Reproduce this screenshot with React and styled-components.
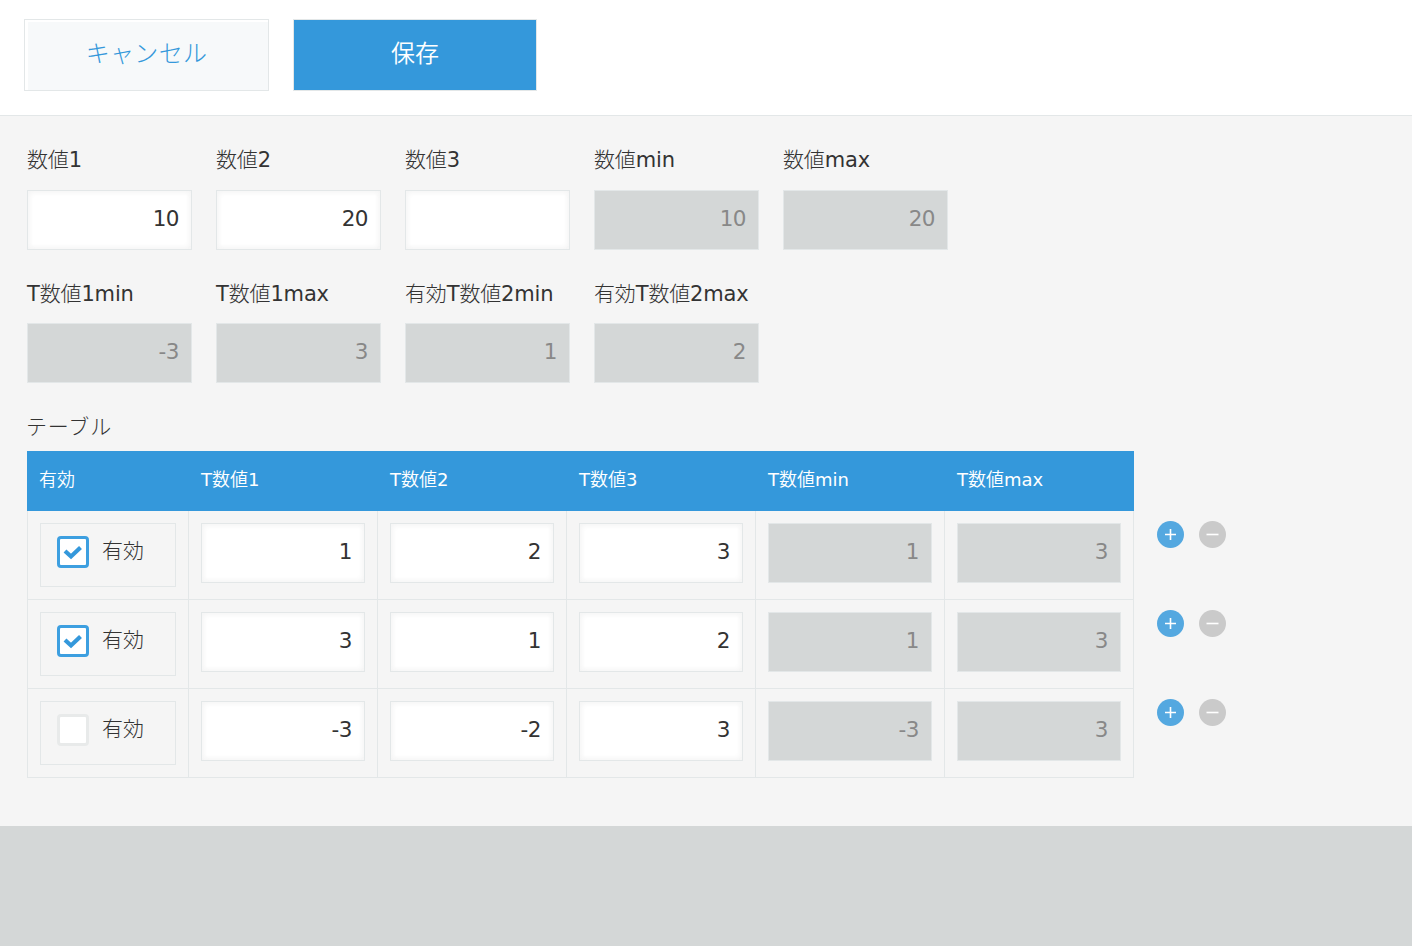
import React, { useState } from "react";
import styled, { createGlobalStyle } from "styled-components";

const lightFont = `"DejaVu Sans", "Noto Sans CJK JP Light", "Noto Sans CJK JP", sans-serif`;

const GlobalStyle = createGlobalStyle`
  * {
    box-sizing: border-box;
  }
  body {
    margin: 0;
    background: #d4d7d7;
    color: #333;
    font-family: "DejaVu Sans", "Noto Sans CJK JP DemiLight", "Noto Sans CJK JP", sans-serif;
    font-size: 21px;
    letter-spacing: -0.15px;
  }
`;

const Toolbar = styled.header`
  display: flex;
  gap: 24px;
  height: 116px;
  padding: 19px 24px 0;
  background: #fff;
  border-bottom: 1px solid #e3e7e8;
`;

const Button = styled.button`
  width: ${(props) => (props.$primary ? 244 : 245)}px;
  height: 72px;
  padding: 0 0 7px;
  border: 1px solid #e3e7e8;
  background: ${(props) => (props.$primary ? "#3498db" : "#f7f9fa")};
  box-shadow: ${(props) => (props.$primary ? "none" : "inset 3px 2px 1px #fff")};
  color: ${(props) => (props.$primary ? "#fff" : "#3498db")};
  font-family: ${(props) => (props.$primary ? "inherit" : lightFont)};
  font-size: 24px;
  letter-spacing: ${(props) => (props.$primary ? 0 : 0.3)}px;
`;

const Form = styled.main`
  height: 710px;
  padding: 28px 27px 0;
  background: #f5f5f5;
`;

const FieldRow = styled.div`
  display: flex;
  gap: 24px;
  height: ${(props) => props.$height}px;
`;

const Field = styled.label`
  width: 165px;
`;

const Label = styled.div`
  height: ${(props) => props.$height || 46}px;
  font-family: ${lightFont};
  line-height: 33px;
  white-space: nowrap;
`;

const TableLabel = styled(Label)`
  letter-spacing: 0.8px;
  margin-left: -1px;
`;

const NumberInput = styled.input`
  display: block;
  width: 100%;
  height: 60px;
  padding: 0 12px 4px;
  border: 1px solid #e3e7e8;
  border-radius: 0;
  outline: none;
  background: #fff;
  box-shadow: inset 2px 2px 5px #f5f5f5, inset -2px -2px 5px #f5f5f5;
  color: #333;
  font-family: inherit;
  font-size: 21.5px;
  letter-spacing: -0.5px;
  text-align: right;

  &:disabled {
    background: #d4d7d7;
    box-shadow: none;
    color: #888;
  }
`;

const Columns = styled.div`
  display: grid;
  grid-template-columns: 161px repeat(4, 189px) 190px;
  width: 1107px;
`;

const TableHead = styled(Columns)`
  height: 60px;
  background: #3498db;
`;

const HeadCell = styled.div`
  padding-left: 13px;
  color: #fff;
  font-size: 18px;
  letter-spacing: 0;
  line-height: 57px;

  &:first-child {
    padding-left: 12px;
  }
`;

const TableLine = styled.div`
  display: flex;
  height: 89px;
`;

const TableRow = styled(Columns)`
  border-bottom: 1px solid #e3e7e8;
`;

const Cell = styled.div`
  padding: 12px 12px 0;
  border-left: 1px solid #e3e7e8;

  &:last-child {
    border-right: 1px solid #e3e7e8;
  }
`;

const CheckField = styled.label`
  display: flex;
  gap: 13px;
  width: 136px;
  height: 64px;
  padding: 13px 0 0 17px;
  border: 1px solid #e3e7e8;
  font-family: ${lightFont};
  letter-spacing: 0;
  line-height: 28px;
`;

const CheckBox = styled.button`
  display: flex;
  align-items: center;
  justify-content: center;
  width: 32px;
  height: 32px;
  margin-left: -1px;
  margin-top: -1px;
  padding: 0;
  border: ${(props) => (props.$checked ? "3px solid #3d9fe0" : "3px solid #e8eaea")};
  border-radius: 4px;
  background: #fff;
`;

const Actions = styled.div`
  display: flex;
  gap: 15px;
  padding: 10px 0 0 23px;
`;

const RoundButton = styled.button`
  display: flex;
  width: 27px;
  height: 27px;
  padding: 0;
  border: 0;
  border-radius: 50%;
  background: ${(props) => (props.$add ? "#54a8e0" : "#cacaca")};
`;

const fields = [
  { label: "数値1", value: "10" },
  { label: "数値2", value: "20" },
  { label: "数値3", value: "" },
  { label: "数値min", value: "10", disabled: true },
  { label: "数値max", value: "20", disabled: true },
];

const tableFields = [
  { label: "T数値1min", value: "-3", disabled: true },
  { label: "T数値1max", value: "3", disabled: true },
  { label: "有効T数値2min", value: "1", disabled: true },
  { label: "有効T数値2max", value: "2", disabled: true },
];

const headings = ["有効", "T数値1", "T数値2", "T数値3", "T数値min", "T数値max"];

const rows = [
  { enabled: true, values: ["1", "2", "3", "1", "3"] },
  { enabled: true, values: ["3", "1", "2", "1", "3"] },
  { enabled: false, values: ["-3", "-2", "3", "-3", "3"] },
];

function Fields({ items, height, labelHeight }) {
  return (
    <FieldRow $height={height}>
      {items.map((item) => (
        <Field key={item.label}>
          <Label $height={labelHeight}>{item.label}</Label>
          <NumberInput defaultValue={item.value} disabled={item.disabled} />
        </Field>
      ))}
    </FieldRow>
  );
}

function RoundIcon({ add }) {
  return (
    <svg width="27" height="27" viewBox="0 0 27 27" stroke="#fff" strokeWidth="1.6">
      <path d={add ? "M8 13.5h11M13.5 8v11" : "M7.5 13.5h12"} />
    </svg>
  );
}

function Row({ row }) {
  const [checked, setChecked] = useState(row.enabled);
  return (
    <TableLine>
      <TableRow>
        <Cell>
          <CheckField>
            <CheckBox $checked={checked} onClick={() => setChecked(!checked)}>
              {checked && (
                <svg width="20" height="18" viewBox="0 0 20 18" fill="none">
                  <path d="M2 8l6 5.5 9.5-9" stroke="#3498db" strokeWidth="4.2" />
                </svg>
              )}
            </CheckBox>
            有効
          </CheckField>
        </Cell>
        {row.values.map((value, i) => (
          <Cell key={i}>
            <NumberInput defaultValue={value} disabled={i > 2} />
          </Cell>
        ))}
      </TableRow>
      <Actions>
        <RoundButton $add>
          <RoundIcon add />
        </RoundButton>
        <RoundButton>
          <RoundIcon />
        </RoundButton>
      </Actions>
    </TableLine>
  );
}

function App() {
  return (
    <>
      <GlobalStyle />
      <Toolbar>
        <Button>キャンセル</Button>
        <Button $primary>保存</Button>
      </Toolbar>
      <Form>
        <Fields items={fields} height={134} labelHeight={46} />
        <Fields items={tableFields} height={133} labelHeight={45} />
        <TableLabel $height={40}>テーブル</TableLabel>
        <TableHead>
          {headings.map((heading) => (
            <HeadCell key={heading}>{heading}</HeadCell>
          ))}
        </TableHead>
        {rows.map((row, i) => (
          <Row key={i} row={row} />
        ))}
      </Form>
    </>
  );
}

export default App;
